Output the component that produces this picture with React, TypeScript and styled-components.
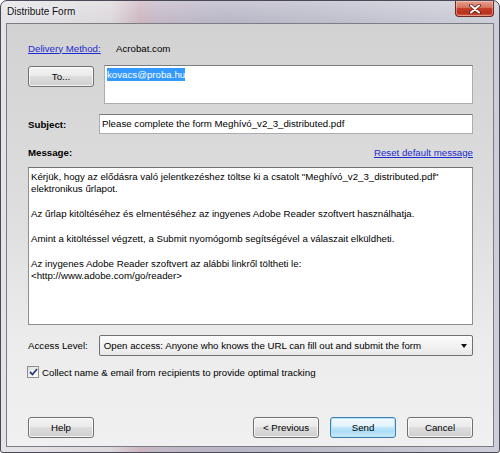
import styled, { createGlobalStyle, css } from "styled-components";

const GlobalStyle = createGlobalStyle`
  html, body {
    margin: 0;
    padding: 0;
    background: #ffffff;
  }
  body {
    font-family: "Liberation Sans", Arial, sans-serif;
  }
`;

const UI_FONT = `"Liberation Sans", Arial, sans-serif`;

const Window = styled.div`
  width: 500px;
  height: 453px;
  box-sizing: border-box;
  display: flex;
  flex-direction: column;
  border: 1px solid #4a4a56;
  border-radius: 7px 7px 3px 3px;
  padding: 0 5px 5px;
  background:
    linear-gradient(180deg, rgba(255, 255, 255, 0.25) 0px, rgba(255, 255, 255, 0) 22px),
    linear-gradient(
      90deg,
      #e4e4e8 0%,
      #dcd8dc 22%,
      #cdb5c0 28%,
      #c4b8c6 31%,
      #b8b6c6 45%,
      #bfc0cc 70%,
      #ccced8 100%
    );
  overflow: hidden;
`;

const TitleBar = styled.div`
  height: 22px;
  display: flex;
  align-items: flex-start;
  justify-content: space-between;
`;

const Title = styled.span`
  margin: 5px 0 0 1px;
  font-family: ${UI_FONT};
  font-size: 10px;
  color: #111;
  text-shadow: 0 0 6px rgba(255, 255, 255, 0.9);
`;

const CloseButton = styled.div`
  width: 39px;
  height: 16px;
  box-sizing: border-box;
  display: flex;
  align-items: center;
  justify-content: center;
  border: 1px solid #6b2a22;
  border-top: none;
  border-radius: 0 0 4px 4px;
  background: linear-gradient(180deg, #e6a392 0%, #d6705a 45%, #c4402a 50%, #b9301c 80%, #d2604a 100%);
  box-shadow: inset 0 0 0 1px rgba(255, 220, 210, 0.45);
`;

const Client = styled.div`
  flex: 1;
  display: flex;
  flex-direction: column;
  border: 1px solid #7c7c84;
  padding: 17px 20px 8px 21px;
  background: linear-gradient(180deg, #d2d2d2 0%, #dedede 45%, #ececec 75%, #f0f0f0 100%);
`;

const Row = styled.div<{ $h: number; $mt?: number }>`
  display: flex;
  align-items: center;
  height: ${(p) => p.$h}px;
  margin-top: ${(p) => p.$mt ?? 0}px;
  font-family: ${UI_FONT};
  font-size: 9.7px;
  color: #000;
`;

const TopRow = styled(Row)`
  align-items: flex-start;
`;

const LinkText = styled.a`
  color: #1c2bd0;
  text-decoration: underline;
  cursor: pointer;
`;

const Label = styled.span<{ $w?: number; $bold?: boolean }>`
  width: ${(p) => (p.$w ? `${p.$w}px` : "auto")};
  flex: none;
  font-weight: ${(p) => (p.$bold ? 700 : 400)};
`;

const Spacer = styled.div`
  flex: 1;
`;

const Button = styled.button<{ $focused?: boolean }>`
  width: 66px;
  height: 21px;
  flex: none;
  box-sizing: border-box;
  padding: 0;
  border: 1px solid #707070;
  border-radius: 3px;
  background: linear-gradient(180deg, #f3f3f3 0%, #ebebeb 45%, #dddddd 50%, #cfcfcf 100%);
  box-shadow: inset 0 0 0 1px rgba(255, 255, 255, 0.75);
  font-family: ${UI_FONT};
  font-size: 9.7px;
  color: #000;
  ${(p) =>
    p.$focused &&
    css`
      border-color: #3c7fb1;
      background: linear-gradient(180deg, #f4fbfe 0%, #e3f4fc 40%, #c4e8fa 50%, #a9dbf6 70%, #d2eefc 100%);
      box-shadow: inset 0 0 0 1px #b6e3f8;
    `}
`;

const TextBox = styled.div<{ $h: number; $ml?: number }>`
  flex: 1;
  height: ${(p) => p.$h}px;
  margin-left: ${(p) => p.$ml ?? 0}px;
  box-sizing: border-box;
  border: 1px solid #abadb3;
  border-top-color: #7a7c82;
  background: #fff;
  padding: 1px 2px;
  font-family: ${UI_FONT};
  font-size: 9.7px;
  line-height: 15px;
  color: #000;
  white-space: pre;
  overflow: hidden;
`;

const Selected = styled.span`
  background: #3399ff;
  color: #fff;
  padding: 1px 0;
`;

const MessageArea = styled.div`
  height: 158px;
  margin-top: 7px;
  box-sizing: border-box;
  border: 1px solid #8c8e94;
  border-top-color: #6f7177;
  background: #fff;
  padding: 3px 2px 2px 2px;
  font-family: ${UI_FONT};
  font-size: 9.7px;
  line-height: 12.4px;
  color: #000;
  white-space: pre;
  overflow: hidden;
`;

const Select = styled.div`
  flex: 1;
  height: 21px;
  margin-left: 11px;
  box-sizing: border-box;
  display: flex;
  align-items: center;
  border: 1px solid #707070;
  border-radius: 2px;
  background: linear-gradient(180deg, #fbfbfb 0%, #f3f3f3 50%, #e9e9e9 100%);
  padding-left: 4px;
`;

const SelectText = styled.span`
  flex: 1;
`;

const DropArrow = styled.div`
  width: 17px;
  height: 100%;
  display: flex;
  align-items: center;
  justify-content: center;
  &::after {
    content: "";
    border-left: 3px solid transparent;
    border-right: 3px solid transparent;
    border-top: 4px solid #111;
  }
`;

const CheckBox = styled.div`
  width: 12px;
  height: 12px;
  flex: none;
  box-sizing: border-box;
  margin-left: -1px;
  margin-right: 3px;
  display: flex;
  align-items: center;
  justify-content: center;
  border: 1px solid #8e8f8f;
  background: linear-gradient(135deg, #dcdcdc 0%, #f4f4f4 60%, #ffffff 100%);
`;

const ButtonBar = styled.div`
  display: flex;
  align-items: center;
  margin-top: auto;
  gap: 11px;
`;

const messageText = `Kérjük, hogy az elődásra való jelentkezéshez töltse ki a csatolt "Meghívó_v2_3_distributed.pdf"
elektronikus űrlapot.

Az űrlap kitöltéséhez és elmentéséhez az ingyenes Adobe Reader szoftvert használhatja.

Amint a kitöltéssel végzett, a Submit nyomógomb segítségével a válaszait elküldheti.

Az inygenes Adobe Reader szoftvert az alábbi linkről töltheti le:
<http://www.adobe.com/go/reader>`;

export default function App() {
  return (
    <>
      <GlobalStyle />
      <Window>
        <TitleBar>
          <Title>Distribute Form</Title>
          <CloseButton>
            <svg width="12" height="10" viewBox="0 0 12 10">
              <path
                d="M2 1.5 L10 8.5 M10 1.5 L2 8.5"
                stroke="#5a1a12"
                strokeWidth="3.6"
                strokeLinecap="round"
              />
              <path
                d="M2 1.5 L10 8.5 M10 1.5 L2 8.5"
                stroke="#ffffff"
                strokeWidth="2"
                strokeLinecap="round"
              />
            </svg>
          </CloseButton>
        </TitleBar>
        <Client>
          <Row $h={14}>
            <Label $w={88}>
              <LinkText>Delivery Method:</LinkText>
            </Label>
            <span>Acrobat.com</span>
          </Row>

          <TopRow $h={39} $mt={10}>
            <Button style={{ marginTop: 1 }}>To...</Button>
            <TextBox $h={39} $ml={10}>
              <Selected>kovacs@proba.hu</Selected>
            </TextBox>
          </TopRow>

          <Row $h={20} $mt={10}>
            <Label $w={71} $bold>
              Subject:
            </Label>
            <TextBox $h={20}>Please complete the form Meghívó_v2_3_distributed.pdf</TextBox>
          </Row>

          <Row $h={16} $mt={10}>
            <Label $bold>Message:</Label>
            <Spacer />
            <LinkText>Reset default message</LinkText>
          </Row>

          <MessageArea>{messageText}</MessageArea>

          <Row $h={21} $mt={10}>
            <Label>Access Level:</Label>
            <Select>
              <SelectText>Open access: Anyone who knows the URL can fill out and submit the form</SelectText>
              <DropArrow />
            </Select>
          </Row>

          <Row $h={14} $mt={9}>
            <CheckBox>
              <svg width="9" height="8" viewBox="0 0 9 8">
                <path d="M1 4 L3.5 6.5 L8 1" fill="none" stroke="#2a3f7a" strokeWidth="1.8" />
              </svg>
            </CheckBox>
            <span>Collect name &amp; email from recipients to provide optimal tracking</span>
          </Row>

          <ButtonBar>
            <Button>Help</Button>
            <Spacer />
            <Button>&lt; Previous</Button>
            <Button $focused>Send</Button>
            <Button>Cancel</Button>
          </ButtonBar>
        </Client>
      </Window>
    </>
  );
}
